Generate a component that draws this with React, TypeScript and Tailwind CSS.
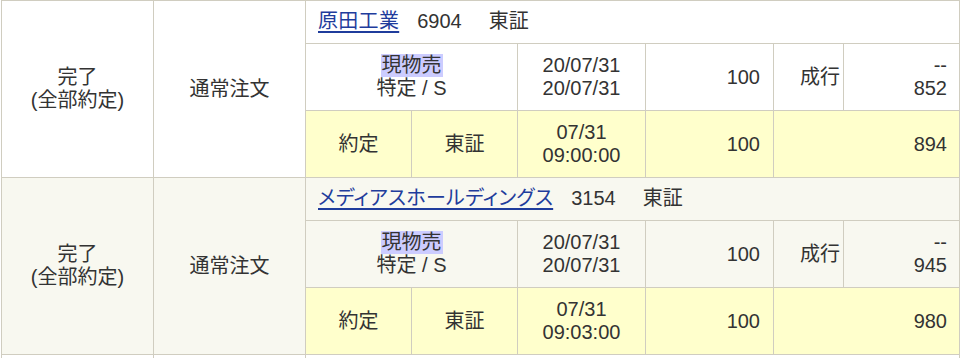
import React from "react";

type Order = {
  name: string;
  code: string;
  market: string;
  bg: string;
  price: string;
  execTime: string;
  execPrice: string;
};

const orders: Order[] = [
  { name: "原田工業", code: "6904", market: "東証", bg: "bg-white", price: "852", execTime: "09:00:00", execPrice: "894" },
  { name: "メディアスホールディングス", code: "3154", market: "東証", bg: "bg-[#f8f8f0]", price: "945", execTime: "09:03:00", execPrice: "980" },
];

const cell = "border-r border-b border-[#d0cdc0]";

function Group({ o }: { o: Order }) {
  return (
    <div className="grid grid-cols-[152px_152px_106px_106px_128px_128px_70px_116px] grid-rows-[43px_67px_67px]">
      <div className={`${cell} ${o.bg} row-span-3 flex flex-col items-center justify-center text-center`}>
        <span>完了</span>
        <span>(全部約定)</span>
      </div>
      <div className={`${cell} ${o.bg} row-span-3 flex items-center justify-center`}>
        <span>通常注文</span>
      </div>
      <div className={`${cell} ${o.bg} col-span-6 flex items-center pl-[12px] pb-[1px]`}>
        <a
          href="#"
          className="text-[#1f3c9c] underline decoration-[#1f3c9c] decoration-2 underline-offset-[3px] tracking-[0.3px] [font-feature-settings:'palt']"
        >
          {o.name}
        </a>
        <span className="ml-[18px]">{o.code}</span>
        <span className="ml-[27px]">{o.market}</span>
      </div>

      <div className={`${cell} ${o.bg} col-span-2 flex flex-col items-center justify-center`}>
        <span className="bg-[#ccccff] px-[1px]">現物売</span>
        <span>特定 / S</span>
      </div>
      <div className={`${cell} ${o.bg} flex flex-col items-center justify-center`}>
        <span>20/07/31</span>
        <span>20/07/31</span>
      </div>
      <div className={`${cell} ${o.bg} flex items-center justify-end pr-[13px]`}>
        <span>100</span>
      </div>
      <div className={`${cell} ${o.bg} flex items-center justify-end pr-[3px]`}>
        <span>成行</span>
      </div>
      <div className={`${cell} ${o.bg} flex flex-col items-end justify-center pr-[12px]`}>
        <span>--</span>
        <span>{o.price}</span>
      </div>

      <div className={`${cell} bg-[#ffffcc] flex items-center justify-center`}>
        <span>約定</span>
      </div>
      <div className={`${cell} bg-[#ffffcc] flex items-center justify-center`}>
        <span>東証</span>
      </div>
      <div className={`${cell} bg-[#ffffcc] flex flex-col items-center justify-center`}>
        <span>07/31</span>
        <span>{o.execTime}</span>
      </div>
      <div className={`${cell} bg-[#ffffcc] flex items-center justify-end pr-[13px]`}>
        <span>100</span>
      </div>
      <div className={`${cell} bg-[#ffffcc] col-span-2 flex items-center justify-end pr-[12px]`}>
        <span>{o.execPrice}</span>
      </div>
    </div>
  );
}

export default function App() {
  return (
    <div className="bg-white min-h-screen">
      <div
        className="ml-px w-[959px] border-l border-t border-[#d0cdc0] text-[20px] leading-[23px] text-[#333333]"
        style={{ fontFamily: '"Liberation Sans", "Noto Sans CJK JP", sans-serif' }}
      >
        {orders.map((o, i) => (
          <Group key={i} o={o} />
        ))}
        <div className="grid grid-cols-[152px_152px_654px] h-[3px]">
          <div className="border-r border-[#d0cdc0] bg-white" />
          <div className="border-r border-[#d0cdc0] bg-white" />
          <div className="border-r border-[#d0cdc0] bg-white" />
        </div>
      </div>
    </div>
  );
}
